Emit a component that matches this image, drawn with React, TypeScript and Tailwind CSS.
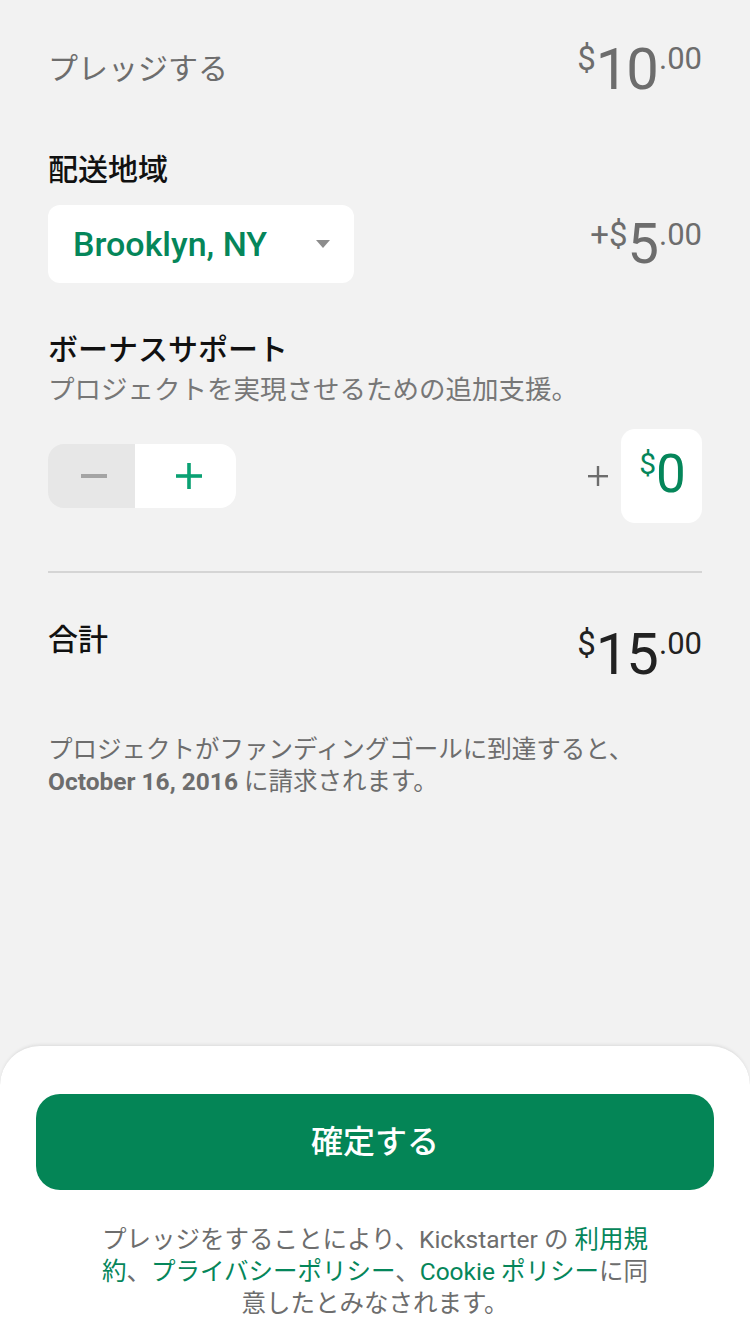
import React from "react";

const font = { fontFamily: 'Roboto, "Noto Sans CJK JP", sans-serif' };

function Amount({
  prefix,
  big,
  cents,
  color,
  bigSize = "text-[58px]",
}: {
  prefix: string;
  big: string;
  cents?: string;
  color: string;
  bigSize?: string;
}) {
  return (
    <div className={`flex items-start ${color}`}>
      <span className="text-[33px] leading-none mt-[2px]">{prefix}</span>
      <span className={`${bigSize} leading-none tracking-[-2px]`}>{big}</span>
      {cents && <span className="text-[31px] leading-none mt-[3px] ml-[2px]">{cents}</span>}
    </div>
  );
}

export default function App() {
  return (
    <div
      className="min-h-[1334px] w-[750px] bg-[#f2f2f2] flex flex-col"
      style={font}
    >
      <div className="flex-1 px-12 pt-[40px]">
        {/* Pledge row */}
        <div className="flex items-center justify-between">
          <span className="text-[30px] leading-[40px] text-[#6d6d6d]">プレッジする</span>
          <Amount prefix="$" big="10" cents=".00" color="text-[#6d6d6d]" />
        </div>

        {/* Shipping */}
        <div className="mt-[52px] text-[30px] leading-[40px] font-medium text-[#111]">配送地域</div>
        <div className="mt-[15px] flex items-center justify-between">
          <div className="h-[78px] w-[306px] bg-white rounded-[12px] flex items-center justify-between pl-[25px] pr-[24px]">
            <span className="text-[34px] font-medium text-[#05865a] leading-none">Brooklyn, NY</span>
            <svg width="14" height="8" viewBox="0 0 14 8">
              <path d="M0 0 H14 L7 8 Z" fill="#8c8c8c" />
            </svg>
          </div>
          <Amount prefix="+$" big="5" cents=".00" color="text-[#6d6d6d]" bigSize="text-[56px]" />
        </div>

        {/* Bonus support */}
        <div className="mt-[47px] text-[30px] leading-[40px] font-medium text-[#111]">ボーナスサポート</div>
        <div className="mt-[2px] text-[26.5px] leading-[36px] text-[#777]">
          プロジェクトを実現させるための追加支援。
        </div>
        <div className="mt-[21px] flex items-center justify-between">
          <div className="flex h-[64px] w-[188px] rounded-[16px] overflow-hidden">
            <button className="w-[87px] h-full bg-[#e7e7e7] flex items-center justify-center pl-[4px]">
              <svg width="26" height="4" viewBox="0 0 26 4">
                <rect width="26" height="4" fill="#a4a4a4" />
              </svg>
            </button>
            <button className="flex-1 h-full bg-white flex items-center justify-center pl-[6px]">
              <svg width="26" height="26" viewBox="0 0 26 26">
                <rect x="0" y="11.2" width="26" height="3.6" fill="#0aa173" />
                <rect x="11.2" y="0" width="3.6" height="26" fill="#0aa173" />
              </svg>
            </button>
          </div>
          <div className="flex items-center gap-[13px]">
            <svg width="20" height="20" viewBox="0 0 20 20">
              <rect x="0" y="9" width="20" height="2.4" fill="#6d6d6d" />
              <rect x="8.8" y="0" width="2.4" height="20" fill="#6d6d6d" />
            </svg>
            <div className="h-[94px] w-[81px] bg-white rounded-[14px] flex items-start justify-center pt-[19px] pl-[2px] text-[#05865a]">
              <span className="text-[30px] leading-none mt-[1px]">$</span>
              <span className="text-[53px] leading-none">0</span>
            </div>
          </div>
        </div>

        <div className="mt-[48px] h-[2px] bg-[#d5d5d5]" />

        {/* Total */}
        <div className="mt-[47px] flex items-start justify-between">
          <span className="text-[30px] leading-[40px] font-medium text-[#111]">合計</span>
          <div className="mt-[5px]">
            <Amount prefix="$" big="15" cents=".00" color="text-[#222]" />
          </div>
        </div>

        <p className="mt-[51px] text-[24.5px] leading-[32px] text-[#6d6d6d]">
          プロジェクトがファンディングゴールに到達すると、
          <br />
          <span className="font-bold">October 16, 2016</span> に請求されます。
        </p>
      </div>

      {/* Bottom sheet */}
      <div className="bg-white rounded-t-[40px] border-t border-[#e3e3e3] shadow-[0_-1px_3px_rgba(0,0,0,0.06)] px-[36px] pt-[48px] pb-[14px]">
        <button className="w-full h-[96px] rounded-[24px] bg-[#048556] text-white text-[32px] font-medium">
          確定する
        </button>
        <p className="mt-[34px] text-center text-[24.5px] leading-[32px] text-[#6d6d6d]">
          プレッジをすることにより、Kickstarter の <span className="text-[#05865a]">利用規<br />約</span>、
          <span className="text-[#05865a]">プライバシーポリシー</span>、
          <span className="text-[#05865a]">Cookie ポリシー</span>に同
          <br />
          意したとみなされます。
        </p>
      </div>
    </div>
  );
}
